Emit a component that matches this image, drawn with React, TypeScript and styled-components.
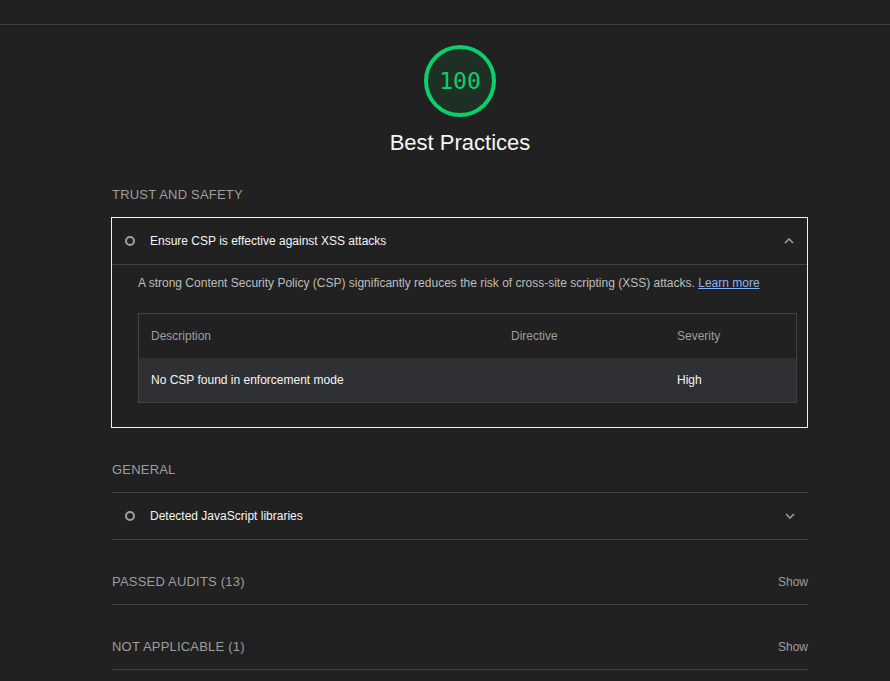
import styled, { createGlobalStyle } from "styled-components";

const Global = createGlobalStyle`
  body {
    margin: 0;
    background: #212121;
    font-family: "Liberation Sans", Arial, sans-serif;
    color: #f5f5f5;
  }
`;

const columns = ["Description", "Directive", "Severity"];

const Chevron = ({ up }: { up?: boolean }) => (
  <svg width="10" height="6" viewBox="0 0 10 6">
    <path
      d={up ? "M1 5 L5 1 L9 5" : "M1 1 L5 5 L9 1"}
      fill="none"
      stroke="#a0a0a0"
      strokeWidth="1.5"
    />
  </svg>
);

export default function App() {
  return (
    <>
      <Global />
      <TopBar />
      <Content>
        <GaugeWrap>
          <Gauge>100</Gauge>
          <GaugeTitle>Best Practices</GaugeTitle>
        </GaugeWrap>

        <GroupTitle top={32}>Trust and Safety</GroupTitle>
        <Card>
          <AuditHeader>
            <Ring />
            <AuditTitle>Ensure CSP is effective against XSS attacks</AuditTitle>
            <Chevron up />
          </AuditHeader>
          <AuditBody>
            <Desc>
              A strong Content Security Policy (CSP) significantly reduces the
              risk of cross-site scripting (XSS) attacks.{" "}
              <Link>Learn more</Link>
            </Desc>
            <Table>
              <HeadRow>
                {columns.map((c) => (
                  <Cell key={c}>{c}</Cell>
                ))}
              </HeadRow>
              <BodyRow>
                <Cell>No CSP found in enforcement mode</Cell>
                <Cell />
                <Cell>High</Cell>
              </BodyRow>
            </Table>
          </AuditBody>
        </Card>

        <GroupTitle top={34} line>
          General
        </GroupTitle>
        <AuditHeader>
          <Ring />
          <AuditTitle>Detected JavaScript libraries</AuditTitle>
          <Chevron />
        </AuditHeader>

        <Clump>
          <ClumpLabel>Passed audits (13)</ClumpLabel>
          <Show>Show</Show>
        </Clump>
        <Clump>
          <ClumpLabel>Not applicable (1)</ClumpLabel>
          <Show>Show</Show>
        </Clump>
      </Content>
    </>
  );
}

const TopBar = styled.div`
  height: 24px;
  border-bottom: 1px solid #3e3e3e;
`;

const Content = styled.div`
  width: 696px;
  margin-left: 112px;
`;

const GaugeWrap = styled.div`
  display: flex;
  flex-direction: column;
  align-items: center;
  padding-top: 20px;
`;

const Gauge = styled.div`
  width: 64px;
  height: 64px;
  border: 4px solid #0cce6b;
  border-radius: 50%;
  background: #1e3026;
  color: #0cce6b;
  display: flex;
  align-items: center;
  justify-content: center;
  font-family: "DejaVu Sans Mono", "Liberation Mono", monospace;
  font-size: 23px;
`;

const GaugeTitle = styled.div`
  margin-top: 14px;
  font-size: 22px;
  line-height: 24px;
  color: #f5f5f5;
`;

const GroupTitle = styled.div<{ top: number; line?: boolean }>`
  padding: ${({ top }) => top}px 0 14px;
  line-height: 16px;
  font-size: 13px;
  letter-spacing: 0.2px;
  text-transform: uppercase;
  color: #9e9e9e;
  border-bottom: ${({ line }) => (line ? "1px solid #424242" : "none")};
`;

const Card = styled.div`
  margin-left: -1px;
  border: 1px solid #f0f0f0;
`;

const AuditHeader = styled.div`
  height: 46px;
  display: flex;
  align-items: center;
  padding: 0 13px;
  border-bottom: 1px solid #424242;
  svg {
    margin-left: auto;
  }
`;

const Ring = styled.div`
  width: 6px;
  height: 6px;
  border: 2px solid #a0a0a0;
  border-radius: 50%;
`;

const AuditTitle = styled.div`
  margin-left: 15px;
  font-size: 12px;
  color: #f5f5f5;
`;

const AuditBody = styled.div`
  padding: 10px 10px 24px 26px;
`;

const Desc = styled.div`
  font-size: 12px;
  line-height: 16px;
  color: #bdbdbd;
`;

const Link = styled.a`
  color: #8ab4f8;
  text-decoration: underline;
`;

const Table = styled.div`
  margin-top: 22px;
  border: 1px solid #424242;
`;

const HeadRow = styled.div`
  display: grid;
  grid-template-columns: 360px 166px 1fr;
  height: 44px;
  align-items: center;
  color: #9e9e9e;
`;

const BodyRow = styled(HeadRow)`
  background: #2f3033;
  color: #f5f5f5;
`;

const Cell = styled.div`
  padding-left: 12px;
  font-size: 12px;
`;

const Clump = styled.div`
  display: flex;
  justify-content: space-between;
  align-items: center;
  padding: 34px 0 14px;
  line-height: 16px;
  border-bottom: 1px solid #424242;
`;

const ClumpLabel = styled.div`
  font-size: 13px;
  letter-spacing: 0.2px;
  text-transform: uppercase;
  color: #9e9e9e;
`;

const Show = styled.div`
  font-size: 12px;
  color: #9e9e9e;
`;
